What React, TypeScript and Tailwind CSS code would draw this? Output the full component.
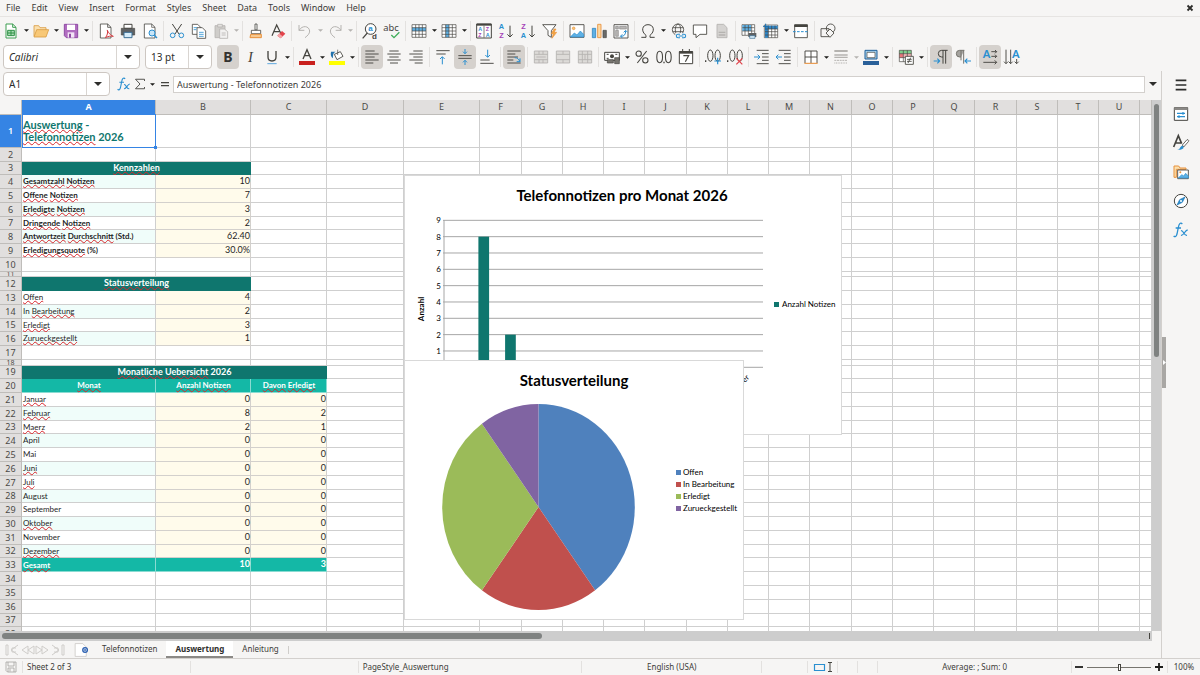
import React, { useState } from 'react';

const K = '#45443f';
const B = '#2a8fd0';
const G = '#b5b3b0';
const O = '#e8913c';

const letter = { fontFamily: 'Liberation Sans', fontWeight: 700 };
const letterA = { fontFamily: 'Noto Sans', fontWeight: 600 };

const icons: Record<string, React.ReactNode> = {
  new: (
    <>
      <path d="M4.500 1.500h10l5 5v16h-15z" fill="#fff" stroke="#3c9d50" strokeWidth="1.500" />
      <path d="M14.500 1.500v5h5" fill="none" stroke="#3c9d50" strokeWidth="1.500" />
      <path d="M7 11h10v8H7zM7 15h10M12 11v8" fill="#a9dcb4" stroke="#2e9145" strokeWidth="1.500" />
    </>
  ),
  open: (
    <>
      <path d="M1.500 20V4h7l2 3h9v4" fill="#fbe0ae" stroke="#d89b3f" strokeWidth="1.200" />
      <path d="M1.500 21l4-11h18l-4 11z" fill="#f8c877" stroke="#d89b3f" strokeWidth="1.200" />
    </>
  ),
  save: (
    <>
      <path d="M2 2h20v20H5l-3-3z" fill="#b06cc0" stroke="#8e4aa3" strokeWidth="1.500" />
      <path d="M6 2.500h12v8H6z" fill="#fff" />
      <path d="M7 14h10v8H7z" fill="#f3e4f6" />
      <path d="M9 16h3v6H9z" fill="#8e4aa3" />
    </>
  ),
  pdf: (
    <>
      <path d="M3.500 1.500h11l5 5v16h-16z" fill="#fff" stroke={K} strokeWidth="1.200" />
      <path d="M14.500 1.500v5h5" fill="none" stroke={K} strokeWidth="1.200" />
      <path d="M11 22c3-3 4-8 3-11s2 7 9 9c-4-1-8 0-12 2z" fill="#fff" stroke="#d33b40" strokeWidth="1.500" />
    </>
  ),
  print: (
    <>
      <path d="M6 2h12v6H6z" fill="#fff" stroke={K} strokeWidth="1.500" />
      <path d="M2 8h20v10H2z" fill="#5e6163" stroke={K} />
      <path d="M6 14h12v8H6z" fill="#d6ecfa" stroke="#3b6e93" strokeWidth="1.500" />
    </>
  ),
  preview: (
    <>
      <path d="M3.500 1.500h11l5 5v16h-16z" fill="#fff" stroke={K} strokeWidth="1.200" />
      <path d="M14.500 1.500v5h5" fill="none" stroke={K} />
      <circle cx="15" cy="15" r="4.500" fill="#c9e6f8" stroke={B} strokeWidth="1.500" />
      <path d="M18.500 18.500l4 4" stroke={B} strokeWidth="2" />
    </>
  ),
  cut: (
    <g fill="none" strokeWidth="1.500">
      <path d="M5 1.500l10 15M19 1.500l-10 15" stroke={K} />
      <circle cx="5.500" cy="18.500" r="3.500" stroke={B} />
      <circle cx="18.500" cy="18.500" r="3.500" stroke={B} />
    </g>
  ),
  copy: (
    <g stroke={K} strokeWidth="1.200" fill="#fff">
      <path d="M2 2h8l4 4v11H2z" />
      <path d="M9 7h8l5 5v11H9z" />
      <path d="M4 7h5M4 10h4M12 14h7M12 17h7M12 20h7" stroke={B} />
    </g>
  ),
  paste: (
    <g stroke={G} strokeWidth="1.200">
      <path d="M3 4h15v18H3z" fill="#cfcdca" />
      <path d="M7 2h7v4H7z" fill="#e4e2df" />
      <path d="M10 9h7l5 4v10H10z" fill="#f2f1f0" />
      <path d="M13 15h6M13 18h6" />
    </g>
  ),
  brush: (
    <>
      <path d="M10.500 1.500h3v9h-3z" fill="#fff" stroke={K} strokeWidth="1.200" />
      <path d="M5 11h14v5H5z" fill="#fff" stroke={K} strokeWidth="1.200" />
      <path d="M4 17h16v5H3z" fill="#f8c990" stroke={O} strokeWidth="1.500" />
    </>
  ),
  clear: (
    <>
      <path d="M3 19L10 3l6 12M6 13h9" fill="none" stroke={K} strokeWidth="1.800" />
      <path d="M11 19l7-7 5 4-7 7z" fill="#e2434b" />
      <path d="M11 19l3-3 5 4-3 3z" fill="#f4a3a6" />
    </>
  ),
  undo: <path d="M3 3v8h8M3 11c5-8 15-7 16 1 0 4-3 7-7 10" fill="none" stroke={G} strokeWidth="1.500" />,
  redo: <path d="M21 3v8h-8M21 11c-5-8-15-7-16 1 0 4 3 7 7 10" fill="none" stroke={G} strokeWidth="1.500" />,
  find: (
    <>
      <circle cx="13" cy="9" r="8" fill="#fff" stroke={K} strokeWidth="1.500" />
      <path d="M8 15l-7 8" stroke={K} strokeWidth="1.800" />
      <text x="9.500" y="12" fontSize="12" fill={B} style={letter}>a</text>
      <text x="15" y="24" fontSize="12" fill={K} style={letter}>d</text>
    </>
  ),
  spell: (
    <>
      <text x="-1" y="12" fontSize="14" fill={K} fontFamily="Noto Sans">abc</text>
      <path d="M11 18l4 4 8-8" fill="none" stroke="#3fae5a" strokeWidth="2" />
    </>
  ),
  row: (
    <>
      <path d="M1.500 2.500h21v19h-21z" fill="#fff" />
      <path d="M1.500 7h21v5h-21z" fill="#5eb0e4" />
      <path d="M1.500 2.500h21v19h-21zM1.500 7h21M1.500 12h21M1.500 17h21M7 2.500v19M12 2.500v19M17 2.500v19" fill="none" stroke={K} />
    </>
  ),
  col: (
    <>
      <path d="M1.500 2.500h21v19h-21z" fill="#fff" />
      <path d="M7 2.500h5v19H7z" fill="#5eb0e4" />
      <path d="M1.500 2.500h21v19h-21zM1.500 7h21M1.500 12h21M1.500 17h21M7 2.500v19M12 2.500v19M17 2.500v19" fill="none" stroke={K} />
    </>
  ),
  sort: (
    <>
      <path d="M1 1.500h22v21H1z" fill="#fff" stroke={K} strokeWidth="1.500" />
      <path d="M1 1h22v3H1z" fill={K} />
      <path d="M12 4v18" stroke={K} />
      <g fontSize="8" style={letter}>
        <text x="3.500" y="12" fill={B}>A</text>
        <text x="3.500" y="21.500" fill="#a643b8">Z</text>
        <text x="14.500" y="12" fill="#a643b8">Z</text>
        <text x="14.500" y="21.500" fill={B}>A</text>
      </g>
    </>
  ),
  asc: (
    <>
      <text x="1" y="9.500" fontSize="11" fill={B} style={letter}>A</text>
      <text x="2" y="22.500" fontSize="11" fill="#a643b8" style={letter}>Z</text>
      <path d="M18 4v17M14 17l4 4 4-4" fill="none" stroke={K} strokeWidth="1.500" />
    </>
  ),
  desc: (
    <>
      <text x="2" y="9.500" fontSize="11" fill="#a643b8" style={letter}>Z</text>
      <text x="1" y="22.500" fontSize="11" fill={B} style={letter}>A</text>
      <path d="M18 4v17M14 17l4 4 4-4" fill="none" stroke={K} strokeWidth="1.500" />
    </>
  ),
  filter: (
    <>
      <path d="M1 2.500h20l-7 9v10l-5-3v-7z" fill="#fff" stroke={K} strokeWidth="1.300" />
      <path d="M18 9l-4 7h3l-2 7 7-9h-4l3-5z" fill="#f3a640" stroke={O} />
    </>
  ),
  image: (
    <>
      <path d="M1.500 2.500h21v19h-21z" fill="#fff" stroke={K} strokeWidth="1.300" />
      <circle cx="7" cy="8" r="2" fill="#f8c877" stroke={O} />
      <path d="M2 21l6-6 4 3 5-6 5 5v4z" fill="#5eb0e4" stroke={B} />
    </>
  ),
  chart: (
    <>
      <path d="M2 8h5v14H2z" fill="#5eb0e4" stroke="#1b77b8" />
      <path d="M10 2h5v20h-5z" fill="#fbd9a5" stroke={O} strokeWidth="1.300" />
      <path d="M18 11h5v11h-5z" fill="#6b6b69" stroke={K} />
    </>
  ),
  pivot: (
    <>
      <path d="M1.500 2.500h21v20h-21z" fill="#fff" stroke={K} strokeWidth="1.300" />
      <path d="M4 5h4v4H4zM10 5h10v4H10zM4 11h4v9H4z" fill="#b9b7b5" stroke="#8a8886" />
      <path d="M12 20c5 0 7-3 7-8M16 14l3-3 3 3M14 17l-3 3 3 2" fill="none" stroke={B} strokeWidth="1.500" />
    </>
  ),
  omega: <path d="M2 21.500h7v-3c-8-6-6-16 3-16s11 10 3 16v3h7" fill="none" stroke={K} strokeWidth="1.500" />,
  link: (
    <>
      <g fill="none" stroke={K} strokeWidth="1.200">
        <circle cx="12" cy="10" r="8.500" />
        <ellipse cx="12" cy="10" rx="4" ry="8.500" />
        <path d="M4 7h16M4 13h16" />
      </g>
      <path d="M8 15h16v9H8z" fill="#f6f5f4" />
      <path d="M15 22h-3a2.500 2.500 0 010-5h3M18 17h3a2.500 2.500 0 010 5h-3M13 19.500h7" fill="none" stroke={B} strokeWidth="1.600" />
    </>
  ),
  comment: <path d="M2 3h20v14H12l-6 5v-5H2z" fill="#fff" stroke={K} strokeWidth="1.300" />,
  page: (
    <>
      <path d="M4.500 2h10l5 5v15h-15z" fill="#d5d3d1" stroke={G} strokeWidth="1.300" />
      <path d="M7 14h10M7 18h10" stroke={G} strokeWidth="2" />
    </>
  ),
  printarea: (
    <>
      <path d="M1.500 2.500h19v16h-19z" fill="#fff" stroke={K} />
      <path d="M2 3h13v9H2z" fill="#5eb0e4" />
      <path d="M6 3v15M11 3v15M16 3v15M2 7h18M2 12h18" stroke={K} fill="none" />
      <path d="M11 15h12v6H11z" fill="#5e6163" />
      <path d="M13 19h8v4h-8z" fill="#d6ecfa" stroke="#3b6e93" />
    </>
  ),
  freeze: (
    <>
      <path d="M2 3h20v19H2z" fill="#fff" stroke={K} />
      <path d="M3 4h19v5H8v13H3z" fill="#2f86c6" />
      <path d="M8 4v18M13 4v18M18 4v18M3 9h19M3 13h19M3 18h19" stroke={K} fill="none" />
      <path d="M0 5h9M4 1v9" stroke="#1d6fae" strokeWidth="1.500" />
    </>
  ),
  split: (
    <>
      <path d="M2.500 3v19h19V3z" fill="#fff" stroke={K} strokeWidth="1.300" />
      <path d="M2 2h20v4H2z" fill={K} />
      <path d="M0 13h24" stroke={B} strokeWidth="1.500" strokeDasharray="4 2" />
    </>
  ),
  shapes: (
    <g fill="#f6f5f4" stroke={K} strokeWidth="1.300">
      <circle cx="16" cy="8" r="6.500" />
      <path d="M1.500 8.500h12v12h-12z" fill="none" />
      <path d="M15 9l6 6-6 6.500-6-6.500z" />
    </g>
  ),
  bold: <text x="5" y="20" fontSize="21" fill="#33322f" style={{ fontFamily: 'Noto Sans', fontWeight: 700 }}>B</text>,
  italic: <text x="9" y="20" fontSize="22" fill={K} style={{ fontFamily: 'Liberation Serif', fontStyle: 'italic' }}>I</text>,
  underline: (
    <>
      <path d="M6 3v9c0 8 12 8 12 0V3" fill="none" stroke={K} strokeWidth="2" />
      <path d="M5 22h14" stroke="#5ea8de" strokeWidth="1.500" />
    </>
  ),
  fontcolor: (
    <>
      <path d="M6 15l6-14 6 14M8.500 10h7" fill="none" stroke={K} strokeWidth="2" />
      <path d="M0 18h24v6H0z" fill="#c9211e" />
    </>
  ),
  highlight: (
    <>
      <path d="M8 8l9-4 4 7-9 5z" fill="#fff" stroke={K} strokeWidth="1.300" />
      <path d="M13 1v8" stroke={K} />
      <path d="M3 4h7c-4 2-4 5-4 10-3-2-4-5-3-10z" fill="#2272ad" />
      <path d="M0 18h24v6H0z" fill="#ffff00" />
    </>
  ),
  left: <path d="M2 3h14M2 7.500h20M2 12h14M2 16.500h20M2 21h12" stroke={K} strokeWidth="1.400" />,
  center: <path d="M5 3h14M2 7.500h20M5 12h14M2 16.500h20M6 21h12" stroke={K} strokeWidth="1.400" />,
  right: <path d="M8 3h14M2 7.500h20M8 12h14M2 16.500h20M10 21h12" stroke={K} strokeWidth="1.400" />,
  top: (
    <>
      <path d="M2 2.500h20M2 7.500h14" stroke={K} strokeWidth="1.400" />
      <path d="M11 23V12M7.500 15l3.500-3.500 3.500 3.500" fill="none" stroke={B} strokeWidth="1.500" />
    </>
  ),
  middle: (
    <>
      <path d="M2 10h20M2 14h20" stroke={K} strokeWidth="1.400" />
      <path d="M12 0v7M9 4l3 3 3-3M12 24v-7M9 20l3-3 3 3" fill="none" stroke={B} strokeWidth="1.500" />
    </>
  ),
  bottom: (
    <>
      <path d="M2 16.500h14M2 21.500h20" stroke={K} strokeWidth="1.400" />
      <path d="M13 1v11M9.500 9l3.500 3.500L16.500 9" fill="none" stroke={B} strokeWidth="1.500" />
    </>
  ),
  wrap: (
    <>
      <path d="M2 3h20M2 7.500h12M2 12h16M2 16.500h9M2 21h20" stroke={K} strokeWidth="1.400" />
      <path d="M13 13c4 0 6 2 8 6M21 14v5h-5" fill="none" stroke={B} strokeWidth="1.500" />
    </>
  ),
  merge: (
    <g fill="#dddbd8" stroke={G} strokeWidth="1.300">
      <path d="M2 3h20v18H2zM2 8h20M2 16h20M9 3v5M15 3v5M9 16v5M15 16v5M5 12h14" />
    </g>
  ),
  mergecells: (
    <g fill="#dddbd8" stroke={G} strokeWidth="1.300">
      <path d="M2 3h20v18H2zM2 8h20M2 16h20M12 3v5M12 16v5" />
    </g>
  ),
  unmerge: (
    <g fill="#dddbd8" stroke={G} strokeWidth="1.300">
      <path d="M2 3h20v18H2zM2 8h20M2 16h20M8 3v18M16 3v18M12 8v8" />
    </g>
  ),
  currency: (
    <>
      <path d="M1 5h22v12H1z" fill="#fff" stroke={K} strokeWidth="1.500" />
      <circle cx="12" cy="11" r="3" fill={K} />
      <path d="M4 8h3M4 14h3M17 8h3" stroke={K} strokeWidth="1.500" />
      <path d="M5 16h9v5H5zM16 13h7v9h-7z" fill="#77756f" stroke={K} />
    </>
  ),
  percent: (
    <g fill="none" stroke={K} strokeWidth="1.600">
      <circle cx="7" cy="7" r="4" />
      <circle cx="17" cy="17" r="4" />
      <path d="M19 3L5 21" />
    </g>
  ),
  number: (
    <g fill="none" stroke={K} strokeWidth="1.600">
      <ellipse cx="5.500" cy="12" rx="4.300" ry="8.500" />
      <ellipse cx="18.500" cy="12" rx="4.300" ry="8.500" />
      <path d="M12 19v2.500" strokeWidth="2" />
    </g>
  ),
  date: (
    <>
      <path d="M2 4h20v18H2z" fill="#fff" stroke={K} strokeWidth="1.500" />
      <path d="M2 3h20v4H2z" fill={K} />
      <path d="M7 0v5M17 0v5" stroke={K} strokeWidth="1.500" />
      <path d="M8 10h8l-5 9" fill="none" stroke={K} strokeWidth="1.800" />
    </>
  ),
  adddec: (
    <g fill="none" stroke={K} strokeWidth="1.500">
      <ellipse cx="8" cy="10" rx="4" ry="8.500" />
      <ellipse cx="19" cy="10" rx="4" ry="8.500" />
      <path d="M1 17v2.500" strokeWidth="2" />
      <path d="M19 13v10M14 18h10" stroke={B} strokeWidth="1.800" />
    </g>
  ),
  deldec: (
    <g fill="none" stroke={K} strokeWidth="1.500">
      <ellipse cx="8" cy="10" rx="4" ry="8.500" />
      <ellipse cx="19" cy="10" rx="4" ry="8.500" />
      <path d="M1 17v2.500" strokeWidth="2" />
      <path d="M14 14l9 9M23 14l-9 9" stroke="#e2434b" strokeWidth="1.800" />
    </g>
  ),
  indent: (
    <>
      <path d="M4 2h18M12 7h10M12 12h10M12 17h10M4 22h18" stroke={K} strokeWidth="1.400" />
      <path d="M0 12h9M5.500 8.500L9 12l-3.500 3.500" fill="none" stroke={B} strokeWidth="1.500" />
    </>
  ),
  outdent: (
    <>
      <path d="M4 2h18M12 7h10M12 12h10M12 17h10M4 22h18" stroke={K} strokeWidth="1.400" />
      <path d="M0 12h9M3.500 8.500L0 12l3.500 3.500" fill="none" stroke={B} strokeWidth="1.500" />
    </>
  ),
  borders: (
    <>
      <path d="M3 21V3h18v18M12 3v18M3 12h18" fill="#fff" stroke={K} strokeWidth="1.400" />
      <path d="M2 21.500h20" stroke={O} strokeWidth="1.600" />
    </>
  ),
  linestyle: (
    <g stroke={G}>
      <path d="M2 3h20" strokeWidth="3" />
      <path d="M2 9h20M2 12.500h20" strokeWidth="2" />
      <path d="M2 17h20" strokeWidth="1.500" strokeDasharray="3 1" />
      <path d="M2 21h20" strokeWidth="1.500" strokeDasharray="1.500 1" />
    </g>
  ),
  bordercolor: (
    <>
      <path d="M3 2h18v13H3z" fill="#a8d2ee" stroke="#1d5f99" strokeWidth="1.500" />
      <path d="M6 5h12v8H6z" fill="#fff" stroke={K} />
      <path d="M0 18h24v6H0z" fill="#2a6099" />
    </>
  ),
  cond: (
    <>
      <path d="M2 2h18v17H2z" fill="#fff" />
      <path d="M2 2h18v5H2z" fill="#7fcf8d" />
      <path d="M2 7h6v6H2z" fill="#e8767b" />
      <path d="M8 7h12v6H8z" fill="#f5b5b7" />
      <path d="M2 2h18v17H2zM2 7h18M2 13h18M8 2v17M14 2v17" fill="none" stroke={K} />
      <path d="M11 11h12v12H11z" fill="#fff" stroke={K} strokeWidth="1.300" />
      <path d="M13.500 15.500h7M13.500 18.500h7M19 13l-4 8" stroke={K} strokeWidth="1.300" />
    </>
  ),
  ltr: (
    <>
      <path d="M22 2h-9a5 5 0 000 10h2M15 2v20M19 2v20" fill="none" stroke={K} strokeWidth="1.500" />
      <path d="M1 18h9M6.500 14.500L10 18l-3.500 3.500" fill="none" stroke={B} strokeWidth="1.700" />
    </>
  ),
  rtl: (
    <>
      <path d="M14 2H7a5 5 0 000 10h2z" fill="#a5a39f" />
      <path d="M14 2H7a5 5 0 000 10h2M9 2v15M13 2v20" fill="none" stroke="#77756f" strokeWidth="1.500" />
      <path d="M15 18h9M18.500 14.500L15 18l3.500 3.500" fill="none" stroke={B} strokeWidth="1.700" />
    </>
  ),
  horizontal: (
    <>
      <text x="1" y="14" fontSize="17" fill={B} style={letterA}>A</text>
      <path d="M14 4h8M14 11h8M2 20h20M19.500 1.500L22 4l-2.500 2.500M19.500 8.500L22 11l-2.500 2.500M19 17l3 3-3 3" fill="none" stroke={K} strokeWidth="1.400" />
    </>
  ),
  vertical: (
    <>
      <text x="12" y="14" fontSize="17" fill={B} style={letterA}>A</text>
      <path d="M3 1v21M10 1v21M19 15v7M0 19l3 3 3-3M7 19l3 3 3-3M16 19l3 3 3-3" fill="none" stroke={K} strokeWidth="1.400" />
    </>
  ),
  properties: (
    <>
      <path d="M2 2.500h20v19H2z" fill="#fff" stroke={K} strokeWidth="1.500" />
      <path d="M2 2h20v4H2z" fill="#8b8986" />
      <path d="M6 11h12M6 16h12M15 9v4M9 14v4" stroke={B} strokeWidth="1.800" />
    </>
  ),
  styles: (
    <>
      <path d="M1 18L8 1l5 12M3.500 12h9" fill="none" stroke={K} strokeWidth="2.500" />
      <path d="M14 15l7-8c3 0 3 2 2 3l-7 8z" fill="#fff" stroke={K} strokeWidth="1.200" />
      <path d="M6 22c5 0 4-5 8-6 4 2 2 7-8 6z" fill="#2a8fd0" />
    </>
  ),
  gallery: (
    <>
      <path d="M1.500 20V3h7l2 3h9v2H5v12z" fill="#fbe0ae" stroke={O} strokeWidth="1.500" />
      <path d="M7 9h16v13H7z" fill="#fff" stroke={K} strokeWidth="1.300" />
      <path d="M8 21l5-5 3 2 3-4 4 4v3z" fill="#5eb0e4" stroke={B} />
      <circle cx="11" cy="12.500" r="1.500" fill={O} />
    </>
  ),
  navigator: (
    <>
      <circle cx="12" cy="12" r="10" fill="#fff" stroke={K} strokeWidth="1.500" />
      <path d="M18 6l-4 8-8 4 4-8z" fill={B} stroke="#1d6fae" />
      <circle cx="12" cy="12" r="1.500" fill="#fff" />
    </>
  ),
  fx: (
    <g fill="none" stroke={B} strokeWidth="1.900">
      <path d="M14 3c-3-3-5 0-6 5L6 18c-1 4-3 5-5 3M4 9h8" />
      <path d="M12 13c4-1 4 8 9 7M22 12c-4 0-6 9-10 8" />
    </g>
  ),
  sum: <path d="M21 6V2.500H3l9 9.500-9 9.500h18V18" fill="none" stroke={K} strokeWidth="1.800" />,
  equals: <path d="M4 9h16M4 15h16" stroke={K} strokeWidth="2.500" />,
  menu: <path d="M4 5h16M4 12h16M4 19h16" stroke="#2d2d2b" strokeWidth="2.500" />,
  floppy: (
    <g fill="none" stroke="#a09e9b" strokeWidth="1.500">
      <path d="M2 2h20v20H5l-3-3zM6 2v8h12V2M6 22v-8h12v8M10 15v6" />
    </g>
  ),
  addsheet: (
    <>
      <path d="M2 1h13l6 6v16H2z" fill="#fff" stroke="#c4c2bf" strokeWidth="1.200" />
      <circle cx="19" cy="12" r="4" fill="#fff" stroke="#2a5fb0" strokeWidth="2.200" />
      <path d="M19 9.500v5M16.500 12h5" stroke="#2a5fb0" strokeWidth="1.500" />
    </>
  ),
};

function Icon({ name, className = 'size-4' }: { name: string; className?: string }) {
  return (
    <svg viewBox="0 0 24 24" className={`${className} shrink-0 overflow-visible`} aria-hidden="true">
      {icons[name]}
    </svg>
  );
}

function Caret({ faded = false }: { faded?: boolean }) {
  return (
    <svg viewBox="0 0 8 4" className="h-[3px] w-[5px] shrink-0" aria-hidden="true">
      <path d="M0 0h8L4 4z" fill={faded ? '#b5b3b0' : '#1d1d1b'} />
    </svg>
  );
}

// "name" = button, "name^" = button with drop-down, "name~" = disabled drop-down, "|" = separator
const standardBar = [
  'new^', 'open^', 'save^', '|', 'pdf', 'print', 'preview', '|', 'cut', 'copy', 'paste~', '|',
  'brush', 'clear', '|', 'undo~', 'redo~', '|', 'find', 'spell', '|', 'row^', 'col^', '|',
  'sort', 'asc', 'desc', 'filter', '|', 'image', 'chart', 'pivot', '|', 'omega^', 'link', 'comment',
  'page', '|', 'printarea', 'freeze^', 'split', '|', 'shapes',
];

const formatBar = [
  'bold', 'italic', 'underline^', '|', 'fontcolor^', 'highlight^', '|', 'left', 'center', 'right', '|',
  'top', 'middle', 'bottom', '|', 'wrap', '|', 'merge', 'mergecells', 'unmerge', '|', 'currency^',
  'percent', 'number', 'date', '|', 'adddec', 'deldec', '|', 'indent', 'outdent', '|', 'borders^',
  'linestyle~', 'bordercolor^', '|', 'cond^', '|', 'ltr', 'rtl', '|', 'horizontal', 'vertical',
];

const pressed = ['bold', 'left', 'middle', 'wrap', 'ltr', 'horizontal'];

function Toolbar({ items }: { items: string[] }) {
  return (
    <div role="toolbar" className="flex h-full items-center">
      {items.map((item, i) => {
        if (item === '|') {
          return <span key={i} className="flex h-5 w-[5px] justify-center"><span className="w-px bg-[#e3e1df]" /></span>;
        }
        const name = item.replace(/[\^~]/, '');
        return (
          <React.Fragment key={i}>
            <button
              type="button"
              aria-label={name}
              className={`flex h-6 w-[22px] items-center justify-center rounded ${pressed.includes(name) ? 'bg-[#d5d1cd]' : ''}`}
            >
              <Icon name={name} />
            </button>
            {item !== name && (
              <button type="button" aria-label={`${name} options`} className="flex h-6 w-2 items-center justify-center">
                <Caret faded={item.endsWith('~')} />
              </button>
            )}
          </React.Fragment>
        );
      })}
    </div>
  );
}

function ComboBox({ label, value, className, inputClass = '' }: { label: string; value: string; className: string; inputClass?: string }) {
  return (
    <div className={`flex h-6 shrink-0 overflow-hidden rounded border border-[#cdc7c2] bg-white ${className}`}>
      <input aria-label={label} defaultValue={value} className={`min-w-0 flex-1 px-[5px] text-[10px] text-[#2d2d2b] outline-none ${inputClass}`} />
      <button type="button" aria-label={`${label} list`} className="flex w-[23px] items-center justify-center border-l border-[#d9d5d1]">
        <svg viewBox="0 0 8 4" className="h-1 w-2" aria-hidden="true"><path d="M0 0h8L4 4z" fill="#2d2d2b" /></svg>
      </button>
    </div>
  );
}

// the unnamed last column takes whatever width is left
const columnNames = [...'ABCDEFGHIJKLMNOPQRSTU'.split(''), ''];
const columnWidths = [134, 95, 76, 77, 76];
const widthOf = (i: number) => columnWidths[i] ?? ((i - 5) % 4 === 0 ? 42 : 41);

const rowHeights = [
  33, 14, 13, 14, 14, 14, 13, 14, 14, 14, 5, 14, 14, 14, 13, 14, 14, 6, 13, 14, 14, 14, 13, 14, 14, 14, 14, 13, 14,
  14, 14, 13, 14, 14, 14, 14, 13, 14,
];

type Cell = { text: string; kind: string; span?: number };

const kinds: Record<string, { cell: string; align: string }> = {
  title: { cell: 'border-[#cfcfcf] text-[11px] font-bold text-[#0f766e]', align: 'items-center' },
  head: { cell: 'border-[#0f766e] bg-[#0f766e] text-[9px] font-bold text-white', align: 'justify-center' },
  sub: { cell: 'border-[#8adbd2] bg-[#14b8a6] font-bold text-white', align: 'justify-center' },
  mintBold: { cell: 'border-[#cfcfcf] bg-[#f0fdfa] font-bold', align: '' },
  plainBold: { cell: 'border-[#cfcfcf] font-bold', align: '' },
  mint: { cell: 'border-[#cfcfcf] bg-[#f0fdfa]', align: '' },
  plain: { cell: 'border-[#cfcfcf]', align: '' },
  num: { cell: 'border-[#d3d0cc] bg-[#fffbeb] text-[9px]', align: 'justify-end' },
  total: { cell: 'border-[#8adbd2] bg-[#14b8a6] font-bold text-white', align: 'items-end' },
  totalNum: { cell: 'border-[#8adbd2] bg-[#14b8a6] text-[9px] font-bold text-white', align: 'justify-end' },
};

const sheet: Record<number, Cell[]> = {
  1: [{ text: 'Auswertung - Telefonnotizen 2026', kind: 'title' }],
  3: [{ text: 'Kennzahlen', kind: 'head', span: 2 }],
  12: [{ text: 'Statusverteilung', kind: 'head', span: 2 }],
  19: [{ text: 'Monatliche Uebersicht 2026', kind: 'head', span: 3 }],
  20: [{ text: 'Monat', kind: 'sub' }, { text: 'Anzahl Notizen', kind: 'sub' }, { text: 'Davon Erledigt', kind: 'sub' }],
  33: [{ text: 'Gesamt', kind: 'total' }, { text: '10', kind: 'totalNum' }, { text: '3', kind: 'totalNum' }],
};

const figures = [
  ['Gesamtzahl Notizen', '10'],
  ['Offene Notizen', '7'],
  ['Erledigte Notizen', '3'],
  ['Dringende Notizen', '2'],
  ['Antwortzeit Durchschnitt (Std.)', '62.40'],
  ['Erledigungsquote (%)', '30.0%'],
];
figures.forEach(([text, value], i) => {
  sheet[4 + i] = [{ text, kind: i % 2 ? 'plainBold' : 'mintBold' }, { text: value, kind: 'num' }];
});

const statuses = [
  { name: 'Offen', count: 4, color: '#4f81bd' },
  { name: 'In Bearbeitung', count: 2, color: '#c0504d' },
  { name: 'Erledigt', count: 3, color: '#9bbb59' },
  { name: 'Zurueckgestellt', count: 1, color: '#8064a2' },
];
statuses.forEach((s, i) => {
  sheet[13 + i] = [{ text: s.name, kind: i % 2 ? 'mint' : 'plain' }, { text: String(s.count), kind: 'num' }];
});

const months = ['Januar', 'Februar', 'Maerz', 'April', 'Mai', 'Juni', 'Juli', 'August', 'September', 'Oktober', 'November', 'Dezember'];
const noted = [0, 8, 2, 0, 0, 0, 0, 0, 0, 0, 0, 0];
const done = [0, 2, 1, 0, 0, 0, 0, 0, 0, 0, 0, 0];
months.forEach((m, i) => {
  sheet[21 + i] = [
    { text: m, kind: i % 2 ? 'mint' : 'plain' },
    { text: String(noted[i]), kind: 'num' },
    { text: String(done[i]), kind: 'num' },
  ];
});

const knownWords = ['In', 'April', 'Mai', 'August', 'September', 'November'];

function Spelled({ text }: { text: string }) {
  return (
    <span>
      {text.split(' ').map((word, i) => (
        <React.Fragment key={i}>
          {i > 0 && ' '}
          {/^[A-Za-z]+$/.test(word) && !knownWords.includes(word) ? (
            <span className="underline decoration-[#d8262c] decoration-wavy decoration-1 underline-offset-0 [text-decoration-skip-ink:none]">{word}</span>
          ) : (
            word
          )}
        </React.Fragment>
      ))}
    </span>
  );
}

function SheetRow({ row, height }: { row: number; height: number }) {
  const cells = sheet[row] ?? [];
  const used = cells.reduce((n, c) => n + (c.span ?? 1), 0);
  return (
    <tr>
      <th scope="row" className={`border-r border-b border-[#bfbdba] p-0 ${row === 1 ? 'bg-[#3584e4] font-semibold text-white' : 'bg-[#e1dfde] font-normal text-[#4b4a47]'}`}>
        <div className="flex items-center justify-center overflow-hidden text-[9px] leading-[12px]" style={{ height: height - 1 }}>
          {height < 10 ? <span className="text-[7px]">{row}</span> : row}
        </div>
      </th>
      {cells.map((cell, i) => (
        <td key={i} colSpan={cell.span} className={`relative border-r border-b p-0 ${kinds[cell.kind].cell}`}>
          <div className={`flex pl-px ${kinds[cell.kind].align}`} style={{ height: height - 1 }}>
            <Spelled text={cell.text} />
          </div>
          {row === 1 && (
            <span className="absolute -top-px -right-px -bottom-px left-0 border border-[#3584e4]">
              <span className="absolute -right-0.5 -bottom-0.5 size-[3px] bg-[#3584e4]" />
            </span>
          )}
        </td>
      ))}
      {columnNames.slice(used).map((c, i) => (
        <td key={i} className="border-r border-b border-[#cfcfcf] p-0" />
      ))}
    </tr>
  );
}

function BarChart() {
  const y = (v: number) => 192.300 - v * 16.330;
  return (
    <svg viewBox="1 1 436 258" className="absolute top-[75px] left-[404px] h-[260px] w-[438px] border border-[#d9d9d9] bg-white font-['Lato']" role="img" aria-label="Telefonnotizen pro Monat 2026">
      <text x="218" y="26" textAnchor="middle" fontSize="15" fontWeight="700">Telefonnotizen pro Monat 2026</text>
      {[0, 1, 2, 3, 4, 5, 6, 7, 8, 9].map(v => (
        <g key={v}>
          <path d={`M39 ${y(v)}H359`} stroke="#a6a6a6" />
          <text x="37" y={y(v) + 3} textAnchor="end" fontSize="8">{v}</text>
        </g>
      ))}
      <path d="M40 45v147" stroke="#a6a6a6" />
      {noted.map((n, i) => n > 0 && <rect key={i} x={47.700 + i * 26.700} y={y(n)} width="10.700" height={y(0) - y(n)} fill="#0f766e" />)}
      {months.map((m, i) => (
        <text key={m} transform={`translate(${52 + i * 26.700} 203) rotate(-45)`} textAnchor="end" fontSize="8">{m}</text>
      ))}
      <text transform="translate(20 134) rotate(-90)" textAnchor="middle" fontSize="8" fontWeight="700">Anzahl</text>
      <rect x="370" y="127" width="5" height="5" fill="#0f766e" />
      <text x="378" y="132" fontSize="8">Anzahl Notizen</text>
    </svg>
  );
}

function PieChart() {
  const total = statuses.reduce((n, s) => n + s.count, 0);
  const point = (n: number) => {
    const a = (n / total) * Math.PI * 2;
    return `${134.500 + 96.300 * Math.sin(a)} ${147 - 103 * Math.cos(a)}`;
  };
  let start = 0;
  return (
    <svg viewBox="1 1 338 258" className="absolute top-[260px] left-[404px] h-[260px] w-[340px] border border-[#d9d9d9] bg-white font-['Lato']" role="img" aria-label="Statusverteilung">
      <text x="170" y="26" textAnchor="middle" fontSize="15" fontWeight="700">Statusverteilung</text>
      {statuses.map((s, i) => {
        const from = start;
        start += s.count;
        return (
          <g key={s.name}>
            <path d={`M134.500 147L${point(from)}A96.300 103 0 0 1 ${point(start)}Z`} fill={s.color} />
            <rect x="272" y={110 + i * 12} width="5" height="5" fill={s.color} />
            <text x="279" y={115 + i * 12} fontSize="8">{s.name}</text>
          </g>
        );
      })}
    </svg>
  );
}

function SheetNav() {
  return (
    <div className="flex w-[62px] justify-between text-[#cfcdca]">
      {['M2 2v10h2V2zM14 2L7 7l7 5M12 5H8v4h4', 'M8 3L2 7l6 4zM14 3L8 7l6 4z', 'M1 3l6 4-6 4zM7 3l6 4-6 4z', 'M11 2v10h2V2zM1 2l7 5-7 5M3 5h4v4H3'].map((d, i) => (
        <button key={i} type="button" aria-label={['First sheet', 'Previous sheet', 'Next sheet', 'Last sheet'][i]}>
          <svg viewBox="0 0 15 14" className="h-3.5 w-[15px]" fill="none" stroke="currentColor"><path d={d} /></svg>
        </button>
      ))}
    </div>
  );
}

export default function App() {
  const [tab, setTab] = useState('Auswertung');

  return (
    <div className="flex h-screen flex-col overflow-hidden bg-[#f6f5f4] font-['Noto_Sans',sans-serif] text-[9px] text-[#3d3c39]">
      <header className="flex h-[17px] shrink-0 items-center justify-between border-b border-[#e6e4e2] px-1.5">
        <nav className="flex gap-[11px]">
          {['File', 'Edit', 'View', 'Insert', 'Format', 'Styles', 'Sheet', 'Data', 'Tools', 'Window', 'Help'].map(m => (
            <button key={m} type="button">{m}</button>
          ))}
        </nav>
        <button type="button" aria-label="Close">
          <svg viewBox="0 0 8 8" className="size-2"><path d="M1.500 1.500l5 5M6.500 1.500l-5 5" stroke="#2d2d2b" strokeWidth="1.800" /></svg>
        </button>
      </header>
      <div className="h-[27px] shrink-0">
        <Toolbar items={standardBar} />
      </div>
      <div className="flex h-[27px] shrink-0 items-center gap-[5px] pb-px pl-[3px]">
        <ComboBox label="Font name" value="Calibri" className="w-[137px]" inputClass="italic" />
        <ComboBox label="Font size" value="13 pt" className="w-[67px]" />
        <Toolbar items={formatBar} />
      </div>

      <div className="flex min-h-0 flex-1">
        <div className="flex min-w-0 flex-1 flex-col">
          <div className="flex h-[29px] shrink-0 items-center pb-[3px] pl-[3px]">
            <ComboBox label="Name Box" value="A1" className="w-[107px]" />
            <div className="flex flex-1 items-center pl-[7px]">
              <button type="button" aria-label="Function Wizard"><Icon name="fx" className="size-3.5" /></button>
              <button type="button" aria-label="Select Function" className="flex items-center gap-1 pl-[3px]"><Icon name="sum" className="size-3" /><Caret /></button>
              <button type="button" aria-label="Formula" className="pr-0.5 pl-1"><Icon name="equals" className="size-3" /></button>
              <input aria-label="Input line" defaultValue="Auswertung - Telefonnotizen 2026" className="h-[17px] flex-1 border border-[#d3d0cd] bg-white px-[3px] outline-none" />
              <button type="button" aria-label="Expand Formula Bar" className="flex w-4 justify-center">
                <svg viewBox="0 0 8 4" className="h-1 w-2"><path d="M0 0h8L4 4z" fill="#2d2d2b" /></svg>
              </button>
            </div>
          </div>

          <div className="flex min-h-0 flex-1">
            <main className="relative min-w-0 flex-1 overflow-hidden bg-white">
              <table className="w-full table-fixed border-separate border-spacing-0 font-['Lato',sans-serif] text-[8px] leading-[12px] text-[#1f1f1f]">
                <colgroup>
                  <col className="w-[22px]" />
                  {columnNames.map((c, i) => <col key={i} style={c ? { width: widthOf(i) } : undefined} />)}
                </colgroup>
                <thead className="font-['Noto_Sans',sans-serif] text-[9px]">
                  <tr>
                    <td className="border-r border-b border-[#bfbdba] bg-[#f6f5f4] p-0" />
                    {columnNames.map((c, i) => (
                      <th key={i} scope="col" className={`h-[15px] border-r border-b border-[#bfbdba] p-0 leading-[14px] ${i === 0 ? 'bg-[#3584e4] font-bold text-white' : 'bg-[#e1dfde] font-normal text-[#4b4a47]'}`}>{c}</th>
                    ))}
                  </tr>
                </thead>
                <tbody className="[&_th]:font-['Noto_Sans',sans-serif]">
                  {rowHeights.map((h, i) => <SheetRow key={i} row={i + 1} height={h} />)}
                </tbody>
              </table>
              <BarChart />
              <PieChart />
            </main>
            <div className="w-[9px] shrink-0 bg-[#cdcdcd] px-0.5 pt-1">
              <div className="h-[48%] rounded-full bg-[#7f8281]" />
            </div>
          </div>
          <div className="mr-[9px] flex h-[10px] shrink-0 items-center justify-between bg-[#cdcdcd] pr-0.5 pl-0.5">
            <div className="h-1.5 w-[47%] rounded-full bg-[#7f8281]" />
            <span className="h-1.5 w-px bg-[#45443f]" />
          </div>
          <div className="flex h-[17px] shrink-0 items-center pl-1 text-[8px]">
            <SheetNav />
            <button type="button" aria-label="Add Sheet" className="mr-[5px] ml-2"><Icon name="addsheet" className="size-3.5" /></button>
            {['Telefonnotizen', 'Auswertung', 'Anleitung'].map(name => (
              <button
                key={name}
                type="button"
                onClick={() => setTab(name)}
                className={`h-full border-b-2 px-[9px] ${tab === name ? 'border-[#8b8986] bg-white font-bold text-[#2d2d2b]' : 'border-transparent'}`}
              >
                {name}
              </button>
            ))}
            <span className="h-2 w-px bg-[#cfcdca]" />
          </div>
        </div>

        <button type="button" aria-label="Hide Sidebar" className="flex w-[5px] shrink-0 items-center border-l border-[#d3d0cd] pb-1">
          <span className="flex h-[51px] w-1 items-center justify-center bg-[#a9a7a4]">
            <svg viewBox="0 0 3 5" className="h-[5px] w-[3px]"><path d="M0 0l3 2.500L0 5z" fill="#fff" /></svg>
          </span>
        </button>
        <aside className="flex w-[34px] shrink-0 flex-col items-center gap-[13px] pt-1.5 pr-1">
          {['menu', 'properties', 'styles', 'gallery', 'navigator', 'fx'].map(name => (
            <button key={name} type="button" aria-label={name} className="flex"><Icon name={name} /></button>
          ))}
        </aside>
      </div>

      <footer className="grid h-[17px] shrink-0 grid-cols-[22px_168fr_168fr_224fr_180fr_46px_30px_20px_20px_194fr_96px_33px] items-center border-t border-[#d3d0cd] text-[8px] [&>*]:flex [&>*]:h-3 [&>*]:items-center [&>*+*]:border-l [&>*+*]:border-[#e3e1df]">
        <span className="justify-center"><Icon name="floppy" className="size-3" /></span>
        <span className="pl-1">Sheet 2 of 3</span>
        <span />
        <span className="pl-1">PageStyle_Auswertung</span>
        <span className="justify-center">English (USA)</span>
        <span />
        <span className="justify-center gap-1">
          <svg viewBox="0 0 24 12" className="h-3 w-6" fill="none"><path d="M3.500 3.500h10v6h-10z" stroke={B} strokeWidth="1.200" /><path d="M17 1.500h4M19 1.500v9M17 10.500h4" stroke={K} /></svg>
        </span>
        <span />
        <span />
        <span className="justify-center">Average: ; Sum: 0</span>
        <span className="justify-center gap-1">
          <button type="button" aria-label="Zoom out"><svg viewBox="0 0 8 8" className="size-2"><path d="M0 4h8" stroke="#1d1d1b" strokeWidth="1.800" /></svg></button>
          <input
            type="range"
            aria-label="Zoom"
            defaultValue={50}
            className="h-2 w-[64px] appearance-none bg-transparent [&::-webkit-slider-runnable-track]:h-px [&::-webkit-slider-runnable-track]:bg-[#77756f] [&::-webkit-slider-thumb]:-mt-[3px] [&::-webkit-slider-thumb]:h-[7px] [&::-webkit-slider-thumb]:w-[3px] [&::-webkit-slider-thumb]:appearance-none [&::-webkit-slider-thumb]:border [&::-webkit-slider-thumb]:border-[#45443f] [&::-webkit-slider-thumb]:bg-white"
          />
          <button type="button" aria-label="Zoom in"><svg viewBox="0 0 8 8" className="size-2"><path d="M0 4h8M4 0v8" stroke="#1d1d1b" strokeWidth="1.800" /></svg></button>
        </span>
        <span className="justify-center">100%</span>
      </footer>
    </div>
  );
}
